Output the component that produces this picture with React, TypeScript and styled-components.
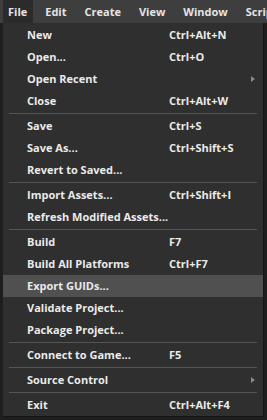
import React from 'react';
import styled, { createGlobalStyle } from 'styled-components';

const GlobalStyle = createGlobalStyle`
  html, body {
    margin: 0;
    padding: 0;
    background: #1f1f1f;
  }
  body {
    font-family: "Open Sans", "Noto Sans", sans-serif;
  }
`;

const Screen = styled.div`
  position: relative;
  width: 267px;
  height: 420px;
  overflow: hidden;
  display: flex;
  flex-direction: column;
  background: #1f1f1f;
`;

const MenuBar = styled.div`
  height: 23px;
  flex: none;
  display: flex;
  align-items: stretch;
  padding-left: 3px;
  gap: 7px;
  background: #3e3e3e;
  white-space: nowrap;
`;

const MenuTitle = styled.div<{ $active?: boolean }>`
  display: flex;
  align-items: center;
  padding: 0 6px 1px 5px;
  font-size: 11px;
  font-weight: 700;
  color: #e4e4e4;
  background: ${(p) => (p.$active ? '#2b2b2b' : 'transparent')};
`;

const Workspace = styled.div`
  position: relative;
  flex: 1;
  background: #1e1e1e;
`;

const Dropdown = styled.div`
  position: absolute;
  left: 3px;
  top: 0;
  width: 260px;
  padding-top: 1px;
  background: #2f2f2f;
  border-right: 1px solid #161616;
  border-bottom: 1px solid #161616;
`;

const Item = styled.div<{ $hover?: boolean }>`
  height: 22px;
  display: grid;
  grid-template-columns: 142px 1fr 12px;
  align-items: center;
  padding-left: 24px;
  font-size: 11px;
  font-weight: 700;
  color: #eaeaea;
  white-space: nowrap;
  background: ${(p) => (p.$hover ? '#505050' : 'transparent')};
`;

const Label = styled.span`
  padding-bottom: 1px;
`;

const Shortcut = styled.span`
  padding-bottom: 1px;
`;

const Arrow = styled.span`
  width: 0;
  height: 0;
  border-top: 3px solid transparent;
  border-bottom: 3px solid transparent;
  border-left: 4px solid #8a8a8a;
`;

const Separator = styled.div`
  height: 1px;
  margin: 1px 6px 1px 6px;
  background: #555555;
`;

type Entry =
  | { label: string; keys?: string; sub?: boolean; hover?: boolean }
  | 'sep';

const entries: Entry[] = [
  { label: 'New', keys: 'Ctrl+Alt+N' },
  { label: 'Open...', keys: 'Ctrl+O' },
  { label: 'Open Recent', sub: true },
  { label: 'Close', keys: 'Ctrl+Alt+W' },
  'sep',
  { label: 'Save', keys: 'Ctrl+S' },
  { label: 'Save As...', keys: 'Ctrl+Shift+S' },
  { label: 'Revert to Saved...' },
  'sep',
  { label: 'Import Assets...', keys: 'Ctrl+Shift+I' },
  { label: 'Refresh Modified Assets...' },
  'sep',
  { label: 'Build', keys: 'F7' },
  { label: 'Build All Platforms', keys: 'Ctrl+F7' },
  { label: 'Export GUIDs...', hover: true },
  { label: 'Validate Project...' },
  { label: 'Package Project...' },
  'sep',
  { label: 'Connect to Game...', keys: 'F5' },
  'sep',
  { label: 'Source Control', sub: true },
  'sep',
  { label: 'Exit', keys: 'Ctrl+Alt+F4' },
];

const titles = ['File', 'Edit', 'Create', 'View', 'Window', 'Script'];

export default function App() {
  return (
    <>
      <GlobalStyle />
      <Screen>
        <MenuBar>
          {titles.map((t, i) => (
            <MenuTitle key={t} $active={i === 0}>
              {t}
            </MenuTitle>
          ))}
        </MenuBar>
        <Workspace>
          <Dropdown>
            {entries.map((e, i) =>
              e === 'sep' ? (
                <Separator key={i} />
              ) : (
                <Item key={i} $hover={e.hover}>
                  <Label>{e.label}</Label>
                  <Shortcut>{e.keys}</Shortcut>
                  {e.sub ? <Arrow /> : <span />}
                </Item>
              ),
            )}
          </Dropdown>
        </Workspace>
      </Screen>
    </>
  );
}
